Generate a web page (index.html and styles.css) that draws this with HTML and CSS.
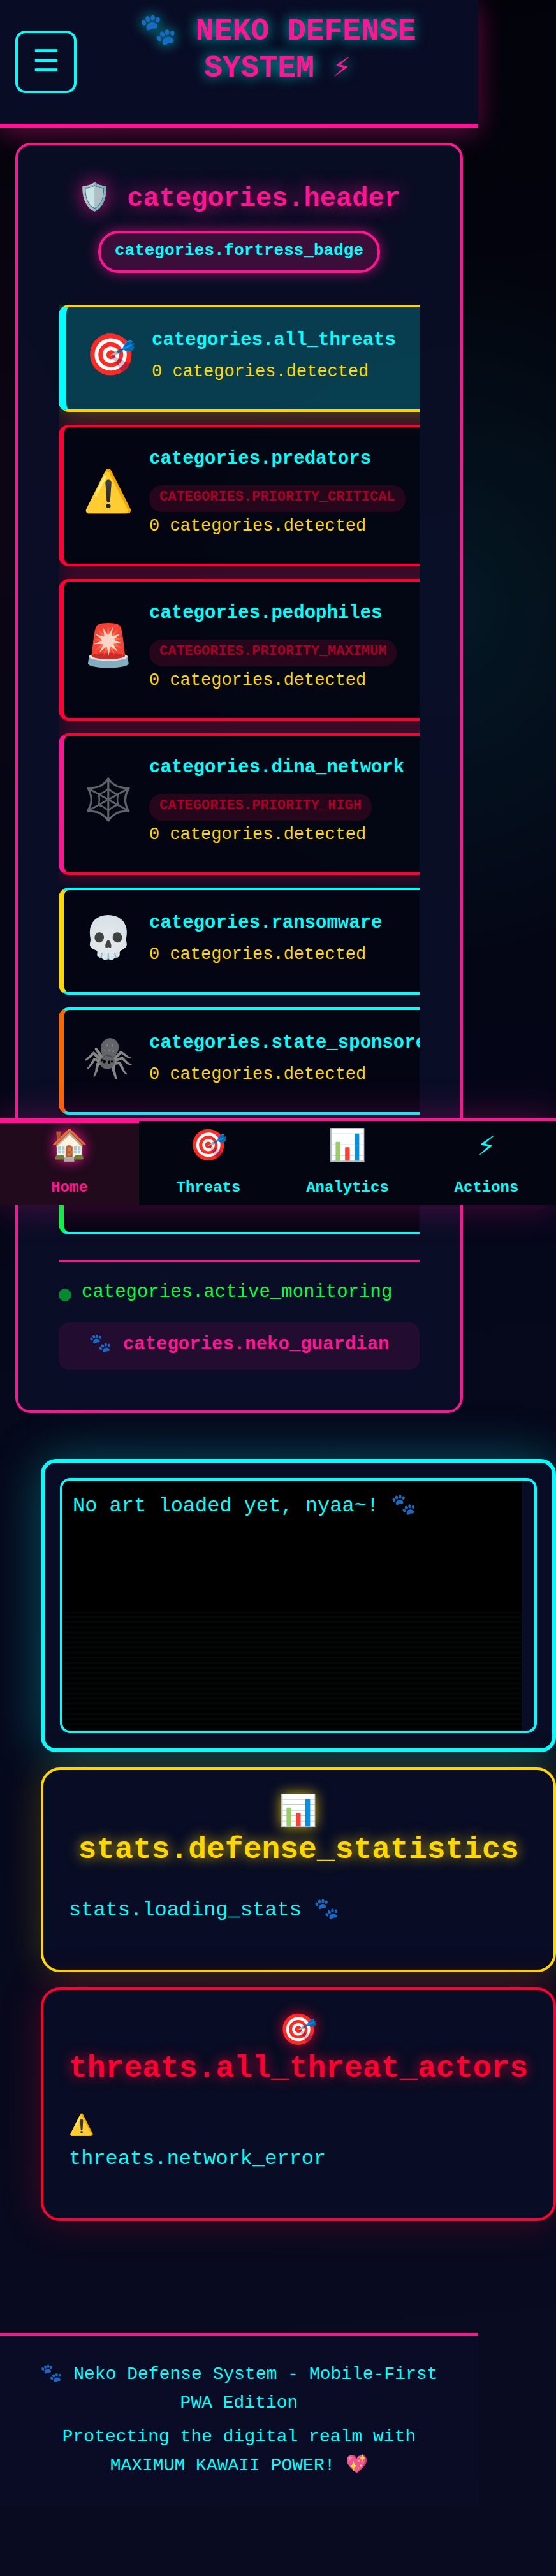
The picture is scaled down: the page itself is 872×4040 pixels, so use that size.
FILE: index.html
```html
<!DOCTYPE html>
<html lang="en">
<head>
<meta charset="utf-8">
<meta name="viewport" content="width=device-width, initial-scale=1">
<title>Neko Defense System</title>
<link rel="stylesheet" href="styles.css">
</head>
<body>
<header class="header">
  <button class="menu" type="button" aria-label="Menu">☰</button>
  <h1 class="title">🐾 NEKO DEFENSE SYSTEM ⚡</h1>
</header>

<main>
  <section class="categories">
    <h2 class="categories-title">🛡️ categories.header</h2>
    <div class="badge">categories.fortress_badge</div>
    <ul class="list">
      <li class="item item-active">
        <span class="icon">🎯</span>
        <div><div class="name">categories.all_threats</div><div class="count">0 categories.detected</div></div>
      </li>
      <li class="item item-priority">
        <span class="icon">⚠️</span>
        <div><div class="name">categories.predators</div><span class="tag">CATEGORIES.PRIORITY_CRITICAL</span><div class="count">0 categories.detected</div></div>
      </li>
      <li class="item item-priority">
        <span class="icon">🚨</span>
        <div><div class="name">categories.pedophiles</div><span class="tag">CATEGORIES.PRIORITY_MAXIMUM</span><div class="count">0 categories.detected</div></div>
      </li>
      <li class="item item-priority edge-pink">
        <span class="icon">🕸️</span>
        <div><div class="name">categories.dina_network</div><span class="tag">CATEGORIES.PRIORITY_HIGH</span><div class="count">0 categories.detected</div></div>
      </li>
      <li class="item edge-gold">
        <span class="icon">💀</span>
        <div><div class="name">categories.ransomware</div><div class="count">0 categories.detected</div></div>
      </li>
      <li class="item edge-orange">
        <span class="icon">🕷️</span>
        <div><div class="name">categories.state_sponsored</div><div class="count">0 categories.detected</div></div>
      </li>
      <li class="item edge-green"></li>
    </ul>
    <div class="status">
      <div class="monitor"><span class="dot"></span>categories.active_monitoring</div>
      <div class="guardian">🐾 categories.neko_guardian</div>
    </div>
  </section>

  <div class="panels">
    <section class="art">
      <div class="screen"><pre class="art-text">No art loaded yet, nyaa~! 🐾</pre></div>
    </section>
    <section class="panel panel-stats">
      <h2 class="panel-title">📊 stats.defense_statistics</h2>
      <p class="panel-text">stats.loading_stats 🐾</p>
    </section>
    <section class="panel panel-threats">
      <h2 class="panel-title">🎯 threats.all_threat_actors</h2>
      <p class="panel-text">⚠️<br>threats.network_error</p>
    </section>
  </div>
</main>

<footer class="footer">
  <p>🐾 Neko Defense System - Mobile-First PWA Edition</p>
  <p>Protecting the digital realm with MAXIMUM KAWAII POWER! 💖</p>
</footer>

<nav class="tabs">
  <a class="tab tab-active" href="#home"><span class="tab-icon">🏠</span>Home</a>
  <a class="tab" href="#threats"><span class="tab-icon">🎯</span>Threats</a>
  <a class="tab" href="#analytics"><span class="tab-icon">📊</span>Analytics</a>
  <a class="tab" href="#actions"><span class="tab-icon">⚡</span>Actions</a>
</nav>
</body>
</html>
```

FILE: styles.css
```css
:root {
  --pink: #ff1493;
  --cyan: #00ffff;
  --gold: #ffd700;
  --red: #ff0033;
  --green: #00ff41;
  --navy: #080c24;
}

* { box-sizing: border-box; margin: 0; padding: 0; }

body {
  position: relative;
  min-height: 100vh;
  overflow-x: hidden;
  font-family: "Liberation Mono", monospace;
  color: var(--cyan);
  background:
    radial-gradient(ellipse 500px 560px at 80% 950px, rgba(0, 255, 255, 0.08), transparent),
    radial-gradient(ellipse 300px 700px at 0 750px, rgba(255, 20, 147, 0.04), transparent),
    linear-gradient(175deg, #020309, #05071a 50%, #090b20);
}

.header {
  display: flex;
  align-items: center;
  gap: 24px;
  height: 200px;
  margin-right: 122px;
  padding: 0 24px;
  background: var(--navy);
  border-bottom: 6px solid var(--pink);
  box-shadow: 0 8px 40px rgba(255, 20, 147, 0.4);
}

.menu {
  width: 96px;
  height: 98px;
  padding-top: 4px;
  font: 48px/58px "Liberation Mono", monospace;
  color: var(--cyan);
  background: none;
  border: 4px solid var(--cyan);
  border-radius: 16px;
}

.title {
  flex: 1;
  margin-bottom: 38px;
  font-size: 48px;
  line-height: 58px;
  text-align: center;
  color: var(--pink);
  text-shadow: 0 0 20px rgba(0, 255, 255, 0.8);
}

.categories {
  margin: 24px 146px 0 24px;
  padding: 64px;
  background: rgba(10, 14, 39, 0.9);
  border: 4px solid var(--pink);
  border-radius: 24px;
}

.categories-title {
  margin: -14px 0 16px;
  font-size: 42px;
  line-height: 68px;
  text-align: center;
  color: var(--pink);
  text-shadow: 0 0 30px rgba(255, 20, 147, 0.8);
}

.badge {
  width: fit-content;
  margin: 0 auto 50px;
  padding: 10px 22px 14px;
  font-size: 26px;
  font-weight: bold;
  line-height: 34px;
  background: rgba(255, 20, 147, 0.2);
  border: 4px solid var(--pink);
  border-radius: 32px;
  box-shadow: 0 0 20px rgba(255, 20, 147, 0.6);
}

.list {
  display: grid;
  grid-template-columns: max-content;
  gap: 20px;
  overflow: hidden;
  list-style: none;
}

.item {
  display: flex;
  align-items: center;
  gap: 24px;
  min-height: 168px;
  padding: 29px 30px 37px;
  background: rgba(2, 3, 12, 0.7);
  border: 4px solid var(--cyan);
  border-left-width: 8px;
  border-radius: 16px;
}

.item-active {
  background: rgba(0, 255, 255, 0.2);
  border-color: var(--gold);
  border-left: 12px solid var(--cyan);
  box-shadow: 0 0 40px rgba(255, 215, 0, 0.4);
}

.item-priority {
  padding-top: 27px;
  border-color: var(--red);
  box-shadow: 0 0 30px rgba(255, 0, 51, 0.4);
}

.edge-pink { border-left-color: var(--pink); }
.edge-gold { border-left-color: var(--gold); }
.edge-orange { border-left-color: #ff6600; }
.edge-green { border-left-color: var(--green); }

.icon { padding-top: 6px; font-size: 64px; line-height: 76px; }

.name {
  margin-bottom: 4px;
  font-size: 29px;
  font-weight: bold;
  line-height: 46px;
}

.tag {
  display: block;
  width: fit-content;
  margin-top: 18px;
  padding: 4px 16px 9px;
  font-size: 22px;
  font-weight: bold;
  line-height: 29px;
  color: #a80028;
  background: #26061a;
  border-radius: 20px;
}

.count { font-size: 27px; line-height: 44px; color: var(--gold); }

.status {
  margin-top: 40px;
  padding-top: 24px;
  border-top: 4px solid var(--pink);
}

.monitor {
  display: flex;
  align-items: center;
  gap: 16px;
  font-size: 29px;
  line-height: 46px;
  color: var(--green);
}

.dot {
  width: 20px;
  height: 20px;
  margin-top: 8px;
  background: #048830;
  border-radius: 50%;
}

.guardian {
  margin-top: 24px;
  padding: 12px 0 16px;
  font-size: 29px;
  font-weight: bold;
  line-height: 46px;
  text-align: center;
  color: var(--pink);
  background: rgba(255, 20, 147, 0.1);
  border-radius: 16px;
}

.panels {
  display: grid;
  gap: 24px;
  margin: 72px 0 176px 64px;
}

.art {
  padding: 24px;
  background: var(--navy);
  border: 6px solid var(--cyan);
  border-radius: 24px;
  box-shadow: 0 0 80px rgba(0, 255, 255, 0.3);
}

.screen {
  height: 400px;
  padding-right: 20px;
  overflow: hidden;
  border: 4px solid var(--cyan);
  border-radius: 16px;
}

.art-text {
  height: 100%;
  padding: 16px;
  font: 32px/48px "Liberation Mono", monospace;
  background:
    linear-gradient(#000 206px, transparent 206px),
    repeating-linear-gradient(#000 0 4px, #000806 4px 8px);
}

.panel {
  padding: 38px 40px 28px;
  background: var(--navy);
  border: 4px solid;
  border-radius: 30px;
}

.panel-stats { border-color: var(--gold); box-shadow: 0 0 60px rgba(255, 215, 0, 0.2); }
.panel-threats { padding-top: 36px; border-color: var(--red); box-shadow: 0 0 60px rgba(255, 0, 51, 0.25); }

.panel-title {
  margin-bottom: 40px;
  font-size: 48px;
  line-height: 58px;
  text-align: center;
}

.panel-stats .panel-title { color: var(--gold); text-shadow: 0 0 20px rgba(255, 215, 0, 0.8); }
.panel-threats .panel-title { margin-bottom: 36px; color: var(--red); text-shadow: 0 0 20px rgba(255, 0, 51, 0.8); }

.panel-text { margin-bottom: 40px; font-size: 32px; line-height: 51px; }

.footer {
  margin-right: 122px;
  padding: 38px 48px 41px;
  font-size: 28px;
  line-height: 45px;
  text-align: center;
  background: #090c24;
  border-top: 4px solid var(--pink);
}

.footer p + p { margin-top: 8px; }

.tabs {
  position: absolute;
  top: 1754px;
  left: 0;
  right: 0;
  display: grid;
  grid-template-columns: repeat(4, 1fr);
  height: 136px;
  background: #030511;
  border-top: 4px solid var(--pink);
  box-shadow: 0 0 60px rgba(255, 20, 147, 0.3);
}

.tab {
  padding-top: 8px;
  font-size: 24px;
  font-weight: bold;
  line-height: 38px;
  text-align: center;
  color: var(--cyan);
  text-decoration: none;
  border-top: 4px solid transparent;
}

.tab-icon {
  display: block;
  height: 74px;
  font-size: 48px;
  font-weight: normal;
  line-height: 58px;
}

.tab-active {
  color: var(--pink);
  background: #200a1c;
  border-top-color: var(--pink);
}

.tab-active .tab-icon { text-shadow: 0 0 20px var(--pink); }
```
